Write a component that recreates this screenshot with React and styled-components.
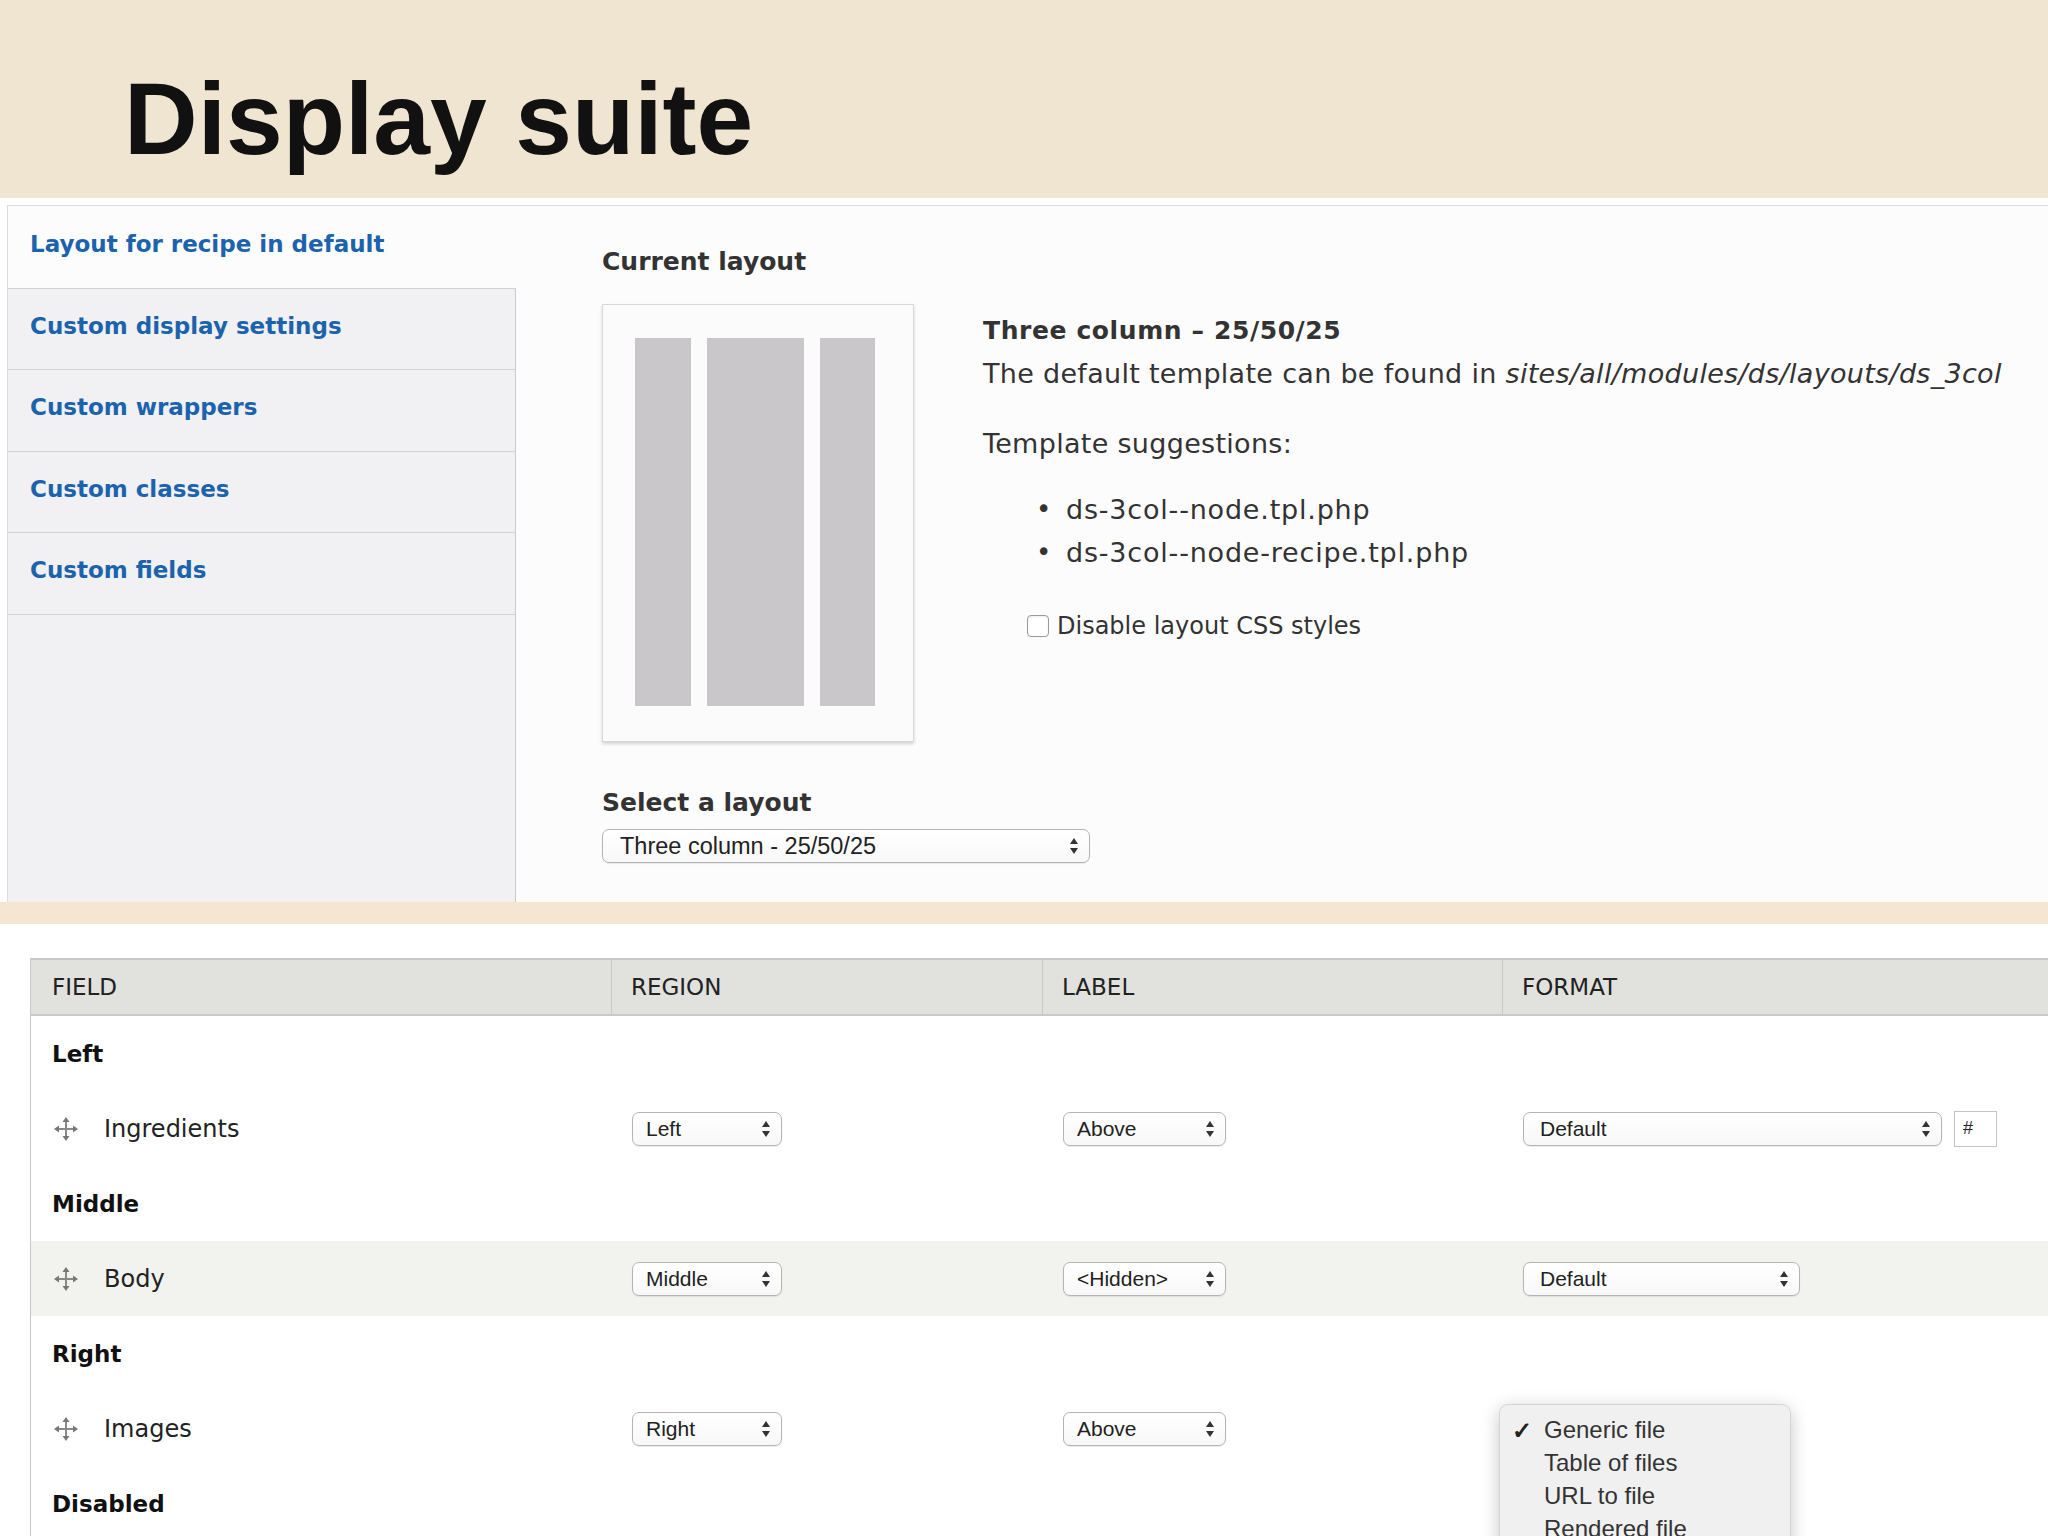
import styled, { createGlobalStyle } from "styled-components";

const GlobalStyle = createGlobalStyle`
    html, body {
        margin: 0;
        padding: 0;
        background: #ffffff;
    }
    body {
        width: 2048px;
        height: 1536px;
        overflow: hidden;
        font-family: "DejaVu Sans", Verdana, sans-serif;
        color: #333;
    }
`;

const UI = `"DejaVu Sans", Verdana, sans-serif`;
const NATIVE = `"Liberation Sans", Arial, Helvetica, sans-serif`;

const Page = styled.div`
    width: 2048px;
    height: 1536px;
    overflow: hidden;
    display: flex;
    flex-direction: column;
    background: #fff;
`;

const Header = styled.header`
    height: 198px;
    flex-shrink: 0;
    box-sizing: border-box;
    background: #efe5d1;
    padding: 68px 0 0 124px;
`;

const Title = styled.h1`
    margin: 0;
    font-family: ${NATIVE};
    font-weight: 700;
    font-size: 102px;
    line-height: 102px;
    color: #111;
`;

const Panel = styled.section`
    margin: 7px 0 0 7px;
    height: 696px;
    flex-shrink: 0;
    display: flex;
    border-top: 1px solid #dadada;
    border-left: 1px solid #dcdcdc;
    background: #fdfcfd;
`;

const Sidebar = styled.nav`
    width: 508px;
    flex-shrink: 0;
    display: flex;
    flex-direction: column;
`;

const Tab = styled.div`
    height: 81.5px;
    box-sizing: border-box;
    display: flex;
    align-items: center;
    padding: 0 0 6px 22px;
    background: ${(p) => (p.$active ? "#fdfcfd" : "#f1f0f2")};
    border-top: ${(p) => (p.$active ? "none" : "1px solid #d2d2d4")};
    border-right: ${(p) => (p.$active ? "1px solid transparent" : "1px solid #cacacc")};
    font-family: ${UI};
    font-weight: 700;
    font-size: 23px;
    color: #1b63ad;
`;

const TabFiller = styled.div`
    flex: 1;
    background: #f1f0f2;
    border-top: 1px solid #d2d2d4;
    border-right: 1px solid #cacacc;
`;

const Main = styled.div`
    flex: 1;
    padding: 42px 0 0 86px;
    display: flex;
    flex-direction: column;
`;

const Heading = styled.h3`
    margin: 0;
    font-family: ${UI};
    font-weight: 700;
    font-size: 25px;
    line-height: 28px;
    color: #333;
`;

const LayoutRow = styled.div`
    display: flex;
    gap: 69px;
    margin-top: 28px;
`;

const Preview = styled.div`
    width: 312px;
    height: 438px;
    box-sizing: border-box;
    flex-shrink: 0;
    background: #fcfbfc;
    border: 1px solid #d8d8d8;
    box-shadow: 0 2px 3px rgba(0, 0, 0, 0.16);
    display: flex;
    gap: 16px;
    padding: 33px 0 0 32px;
`;

const Bar = styled.div`
    width: ${(p) => p.$w}px;
    height: 368px;
    background: #c9c7c9;
`;

const Info = styled.div`
    display: flex;
    flex-direction: column;
    padding-top: 10px;
    font-family: ${UI};
    font-size: 27px;
    letter-spacing: 0.3px;
    color: #333;
`;

const InfoTitle = styled.div`
    font-weight: 700;
    font-size: 25px;
    line-height: 34px;
    letter-spacing: 0.6px;
`;

const InfoLine = styled.div`
    line-height: 40px;
    margin-top: ${(p) => p.$mt || 0}px;

    em {
        font-style: italic;
    }
`;

const Suggestions = styled.ul`
    margin: 24px 0 0 0;
    padding: 0 0 0 53px;
    list-style: none;
    font-size: 27px;
    letter-spacing: 0.8px;
    line-height: 43px;

    li {
        display: flex;
    }

    li::before {
        content: "•";
        width: 30px;
        flex-shrink: 0;
        font-size: 26px;
    }
`;

const CheckRow = styled.label`
    display: flex;
    align-items: center;
    gap: 8px;
    margin: 38px 0 0 44px;
    font-size: 24px;
    letter-spacing: 0;
`;

const Checkbox = styled.span`
    width: 20px;
    height: 20px;
    border: 1.5px solid #9a9a9a;
    border-radius: 4px;
    background: #fff;
    box-shadow: inset 0 1px 2px rgba(0, 0, 0, 0.08);
`;

const SelectHeading = styled(Heading)`
    margin-top: 47px;
`;

const SelectBox = styled.div`
    width: ${(p) => p.$w}px;
    height: 34px;
    box-sizing: border-box;
    display: flex;
    align-items: center;
    justify-content: space-between;
    padding: 0 10px 0 ${(p) => p.$pl || 13}px;
    border: 1.5px solid #b4b4b4;
    border-radius: 7px;
    background: linear-gradient(#ffffff, #f8f8f8);
    box-shadow: 0 1px 1px rgba(0, 0, 0, 0.08);
    font-family: ${NATIVE};
    font-size: 21px;
    color: #222;
    white-space: nowrap;
`;

const LayoutSelect = styled(SelectBox)`
    margin-top: 12px;
    font-size: 23.5px;
`;

const Band = styled.div`
    height: 22px;
    flex-shrink: 0;
    background: #f4e6d3;
`;

const TableWrap = styled.section`
    margin: 34px 0 0 30px;
    width: 2100px;
    flex: 1;
    border-left: 1.5px solid #c8c8c8;
    position: relative;
`;

const HeadRow = styled.div`
    display: grid;
    grid-template-columns: 580px 431px 460px 1fr;
    height: 58px;
    box-sizing: border-box;
    background: #e1e2dd;
    border-top: 2px solid #c9c9c7;
    border-bottom: 2px solid #c9c9c7;
`;

const HeadCell = styled.div`
    display: flex;
    align-items: center;
    padding-left: ${(p) => (p.$first ? 21 : 19)}px;
    border-left: ${(p) => (p.$first ? "none" : "1.5px solid #c9c9c7")};
    font-family: ${UI};
    font-size: 23px;
    color: #222;
`;

const RegionRow = styled.div`
    height: 75px;
    display: flex;
    align-items: center;
    padding-left: 21px;
    font-family: ${UI};
    font-weight: 700;
    font-size: 23px;
    color: #111;
`;

const FieldRow = styled.div`
    display: grid;
    grid-template-columns: 580px 431px 460px 1fr;
    height: 75px;
    align-items: center;
    background: ${(p) => (p.$alt ? "#f2f2ef" : "transparent")};
`;

const FieldName = styled.div`
    display: flex;
    align-items: center;
    gap: 26px;
    padding-left: 23px;
    font-family: ${UI};
    font-size: 24px;
    color: #222;
`;

const Cell = styled.div`
    display: flex;
    align-items: center;
    gap: 12px;
    padding-left: ${(p) => p.$pl ?? 21}px;
    position: relative;
    height: 100%;
`;

const HashBox = styled.div`
    width: 43px;
    height: 36px;
    box-sizing: border-box;
    border: 1.5px solid #c4c4c4;
    display: flex;
    align-items: center;
    padding-left: 8px;
    font-family: ${NATIVE};
    font-size: 18px;
    color: #222;
`;

const Menu = styled.div`
    position: absolute;
    left: -3px;
    top: 13px;
    width: 290px;
    padding: 8px 0 16px;
    background: rgba(240, 240, 240, 0.97);
    border: 1px solid #d4d4d4;
    border-radius: 9px;
    box-shadow: 0 4px 18px rgba(0, 0, 0, 0.22);
    font-family: ${NATIVE};
    font-size: 24px;
    color: #333;
    z-index: 2;
`;

const MenuItem = styled.div`
    position: relative;
    height: 33px;
    line-height: 33px;
    padding-left: 44px;
`;

const Check = styled.span`
    position: absolute;
    left: 12px;
    top: 1px;
    font-size: 24px;
    font-weight: 700;
    color: #222;
`;

const Arrows = () => (
    <svg width="10" height="18" viewBox="0 0 10 18">
        <path d="M5 1 L9 7 L1 7 Z" fill="#333" />
        <path d="M5 17 L9 11 L1 11 Z" fill="#333" />
    </svg>
);

const Select = ({ w, pl, children }) => (
    <SelectBox $w={w} $pl={pl}>
        <span>{children}</span>
        <Arrows />
    </SelectBox>
);

const DragHandle = () => (
    <svg width="24" height="26" viewBox="0 0 24 26">
        <g stroke="#888" strokeWidth="2" fill="none">
            <line x1="12" y1="3" x2="12" y2="23" />
            <line x1="2" y1="13" x2="22" y2="13" />
        </g>
        <g fill="#777">
            <path d="M12 1 L15.5 6 L8.5 6 Z" />
            <path d="M12 25 L15.5 20 L8.5 20 Z" />
            <path d="M0 13 L5 9.5 L5 16.5 Z" />
            <path d="M24 13 L19 9.5 L19 16.5 Z" />
        </g>
    </svg>
);

const tabs = [
    "Custom display settings",
    "Custom wrappers",
    "Custom classes",
    "Custom fields",
];

const App = () => {
    return (
        <Page>
            <GlobalStyle />
            <Header>
                <Title>Display suite</Title>
            </Header>

            <Panel>
                <Sidebar>
                    <Tab $active>Layout for recipe in default</Tab>
                    {tabs.map((t) => (
                        <Tab key={t}>{t}</Tab>
                    ))}
                    <TabFiller />
                </Sidebar>

                <Main>
                    <Heading>Current layout</Heading>
                    <LayoutRow>
                        <Preview>
                            <Bar $w={56} />
                            <Bar $w={97} />
                            <Bar $w={55} />
                        </Preview>
                        <Info>
                            <InfoTitle>Three column – 25/50/25</InfoTitle>
                            <InfoLine $mt={6}>
                                The default template can be found in{" "}
                                <em>sites/all/modules/ds/layouts/ds_3col</em>
                            </InfoLine>
                            <InfoLine $mt={30}>Template suggestions:</InfoLine>
                            <Suggestions>
                                <li>ds-3col--node.tpl.php</li>
                                <li>ds-3col--node-recipe.tpl.php</li>
                            </Suggestions>
                            <CheckRow>
                                <Checkbox />
                                Disable layout CSS styles
                            </CheckRow>
                        </Info>
                    </LayoutRow>
                    <SelectHeading>Select a layout</SelectHeading>
                    <LayoutSelect $w={488} $pl={17}>
                        <span>Three column - 25/50/25</span>
                        <Arrows />
                    </LayoutSelect>
                </Main>
            </Panel>

            <Band />

            <TableWrap>
                <HeadRow>
                    <HeadCell $first>FIELD</HeadCell>
                    <HeadCell>REGION</HeadCell>
                    <HeadCell>LABEL</HeadCell>
                    <HeadCell>FORMAT</HeadCell>
                </HeadRow>

                <RegionRow>Left</RegionRow>
                <FieldRow>
                    <FieldName>
                        <DragHandle />
                        Ingredients
                    </FieldName>
                    <Cell>
                        <Select w={150}>Left</Select>
                    </Cell>
                    <Cell>
                        <Select w={163}>Above</Select>
                    </Cell>
                    <Cell>
                        <Select w={419} pl={16}>Default</Select>
                        <HashBox>#</HashBox>
                    </Cell>
                </FieldRow>

                <RegionRow>Middle</RegionRow>
                <FieldRow $alt>
                    <FieldName>
                        <DragHandle />
                        Body
                    </FieldName>
                    <Cell>
                        <Select w={150}>Middle</Select>
                    </Cell>
                    <Cell>
                        <Select w={163}>&lt;Hidden&gt;</Select>
                    </Cell>
                    <Cell>
                        <Select w={277} pl={16}>Default</Select>
                    </Cell>
                </FieldRow>

                <RegionRow>Right</RegionRow>
                <FieldRow>
                    <FieldName>
                        <DragHandle />
                        Images
                    </FieldName>
                    <Cell>
                        <Select w={150}>Right</Select>
                    </Cell>
                    <Cell>
                        <Select w={163}>Above</Select>
                    </Cell>
                    <Cell $pl={0}>
                        <Menu>
                            <MenuItem>
                                <Check>✓</Check>
                                Generic file
                            </MenuItem>
                            <MenuItem>Table of files</MenuItem>
                            <MenuItem>URL to file</MenuItem>
                            <MenuItem>Rendered file</MenuItem>
                        </Menu>
                    </Cell>
                </FieldRow>

                <RegionRow>Disabled</RegionRow>
            </TableWrap>
        </Page>
    );
};

export default App;
